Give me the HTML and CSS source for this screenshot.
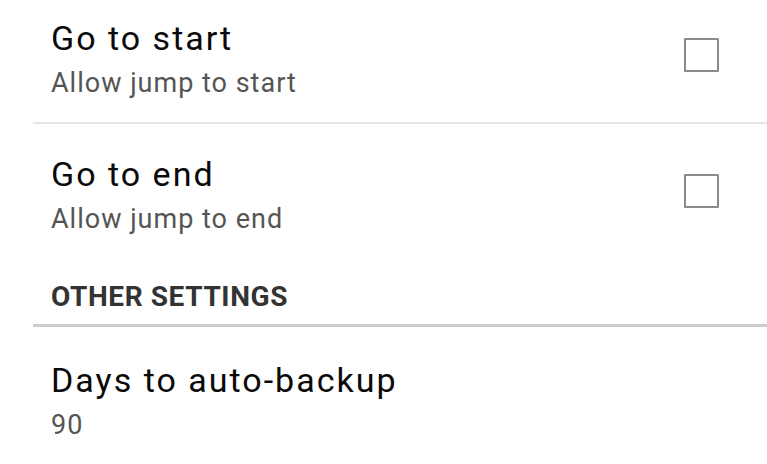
FILE: index.html
```html
<!DOCTYPE html>
<html lang="en">
<head>
    <meta charset="UTF-8">
    <meta name="viewport" content="width=device-width, initial-scale=1.0">
    <title>Settings</title>
    <link rel="stylesheet" href="styles.css">
</head>
<body>
    <div class="settings-list">
        <div class="pref-row">
            <div class="pref-text">
                <div class="pref-title">Go to start</div>
                <div class="pref-summary">Allow jump to start</div>
            </div>
            <div class="pref-check"></div>
        </div>
        <div class="pref-divider"></div>

        <div class="pref-row">
            <div class="pref-text">
                <div class="pref-title">Go to end</div>
                <div class="pref-summary">Allow jump to end</div>
            </div>
            <div class="pref-check"></div>
        </div>

        <div class="pref-category">
            <h3>OTHER SETTINGS</h3>
        </div>

        <div class="pref-row pref-row-plain">
            <div class="pref-text">
                <div class="pref-title">Days to auto-backup</div>
                <div class="pref-summary">90</div>
            </div>
        </div>
    </div>
</body>
</html>
```

FILE: styles.css
```css
body {
    margin: 0;
    background-color: #ffffff;
    font-family: Roboto, 'Noto Sans', sans-serif;
    overflow: hidden;
}
.settings-list {
    margin-top: -12px;
}
.pref-row {
    box-sizing: border-box;
    height: 134px;
    display: flex;
    align-items: center;
    padding: 0 48px 0 51px;
}
.pref-text {
    flex: 1;
    align-self: flex-start;
    padding-top: 30px;
}
.pref-title {
    font-size: 34px;
    line-height: 40px;
    letter-spacing: 2px;
    color: #0a0a0a;
}
.pref-summary {
    font-size: 27px;
    line-height: 50px;
    letter-spacing: 1px;
    color: #555555;
}
.pref-check {
    width: 31px;
    height: 30px;
    border: 2px solid #8a8a8a;
    border-radius: 1px;
}
.pref-divider {
    height: 2px;
    margin-left: 33px;
    background-color: #e4e4e4;
}
.pref-category {
    margin-left: 33px;
    padding: 23px 0 11px 18px;
    border-bottom: 3px solid #cccccc;
}
.pref-category h3 {
    margin: 0;
    font-size: 28px;
    line-height: 32px;
    letter-spacing: 0.6px;
    font-weight: bold;
    color: #333333;
}
.pref-row-plain .pref-text {
    padding-top: 33px;
}
```
